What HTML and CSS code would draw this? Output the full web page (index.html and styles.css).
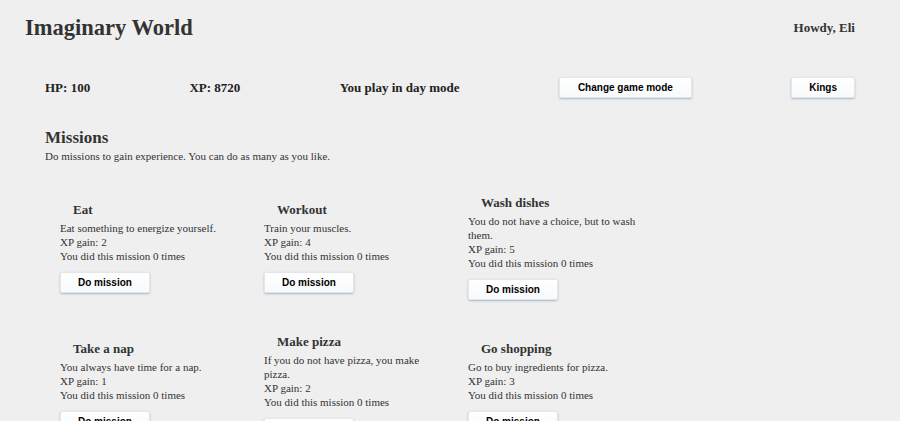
FILE: index.html
```html
<!DOCTYPE html>
<html lang="en">
<head>
    <meta charset="UTF-8">
    <meta name="viewport" content="width=device-width, initial-scale=1.0">
    <title>Imaginary World</title>
    <link rel="stylesheet" href="styles.css">
</head>
<body>
    <div class="top-bar">
        <h1>Imaginary World</h1>
        <div class="greeting">Howdy, Eli</div>
    </div>

    <!-- Player stats -->
    <div class="stats">
        <div class="stat">HP: 100</div>
        <div class="stat">XP: 8720</div>
        <div class="stat">You play in day mode</div>
        <button class="btn btn-wide">Change game mode</button>
        <button class="btn">Kings</button>
    </div>

    <div class="missions">
        <h2>Missions</h2>
        <p class="missions-intro">Do missions to gain experience. You can do as many as you like.</p>

        <div class="mission-grid">
            <div class="mission">
                <h3>Eat</h3>
                <p>Eat something to energize yourself.</p>
                <p>XP gain: 2</p>
                <p>You did this mission 0 times</p>
                <button class="btn">Do mission</button>
            </div>
            <div class="mission">
                <h3>Workout</h3>
                <p>Train your muscles.</p>
                <p>XP gain: 4</p>
                <p>You did this mission 0 times</p>
                <button class="btn">Do mission</button>
            </div>
            <div class="mission">
                <h3>Wash dishes</h3>
                <p>You do not have a choice, but to wash them.</p>
                <p>XP gain: 5</p>
                <p>You did this mission 0 times</p>
                <button class="btn">Do mission</button>
            </div>
            <div class="mission">
                <h3>Take a nap</h3>
                <p>You always have time for a nap.</p>
                <p>XP gain: 1</p>
                <p>You did this mission 0 times</p>
                <button class="btn">Do mission</button>
            </div>
            <div class="mission">
                <h3>Make pizza</h3>
                <p>If you do not have pizza, you make pizza.</p>
                <p>XP gain: 2</p>
                <p>You did this mission 0 times</p>
                <button class="btn">Do mission</button>
            </div>
            <div class="mission">
                <h3>Go shopping</h3>
                <p>Go to buy ingredients for pizza.</p>
                <p>XP gain: 3</p>
                <p>You did this mission 0 times</p>
                <button class="btn">Do mission</button>
            </div>
        </div>
    </div>
</body>
</html>
```

FILE: styles.css
```css
* {
    margin: 0;
    padding: 0;
    box-sizing: border-box;
}

body {
    font-family: "Liberation Serif", "Times New Roman", serif;
    background-color: #efefef;
    color: #333;
    font-size: 11px;
    line-height: 14px;
}

.top-bar {
    display: flex;
    justify-content: space-between;
    align-items: center;
    padding: 15px 45px 0 25px;
}

.top-bar h1 {
    font-size: 22.5px;
    line-height: 26px;
    font-weight: bold;
}

.greeting {
    font-size: 13px;
    font-weight: bold;
    line-height: 16px;
}

/* Stats bar */
.stats {
    display: flex;
    justify-content: space-between;
    align-items: center;
    margin-top: 36px;
    padding: 0 45px;
}

.stat {
    font-size: 13px;
    font-weight: bold;
    color: #222;
}

.btn {
    font-family: "Liberation Sans", Arial, sans-serif;
    font-size: 10px;
    font-weight: bold;
    line-height: 12px;
    color: #000;
    padding: 4px 17px 3px;
    background: linear-gradient(#ffffff, #f7f9fb);
    border: 1px solid #e4e6e8;
    border-radius: 2px;
    box-shadow: 0 1px 2px rgba(70, 120, 170, 0.45);
    cursor: pointer;
}

.btn-wide {
    padding: 4px 18px 3px;
}

.btn:hover {
    background: #f2f6fa;
}

/* Missions */
.missions {
    padding: 30px 45px 0;
}

.missions h2 {
    font-size: 17px;
    line-height: 20px;
    font-weight: bold;
}

.missions-intro {
    margin-top: 1px;
}

.mission-grid {
    display: grid;
    grid-template-columns: repeat(3, 180px);
    column-gap: 24px;
    row-gap: 34px;
    align-items: center;
    margin-top: 32px;
    padding-left: 15px;
}

.mission {
    display: flex;
    flex-direction: column;
    align-items: flex-start;
}

.mission h3 {
    font-size: 13px;
    line-height: 16px;
    font-weight: bold;
    padding-left: 13px;
    margin-bottom: 3px;
}

.mission .btn {
    margin-top: 9px;
}
```
